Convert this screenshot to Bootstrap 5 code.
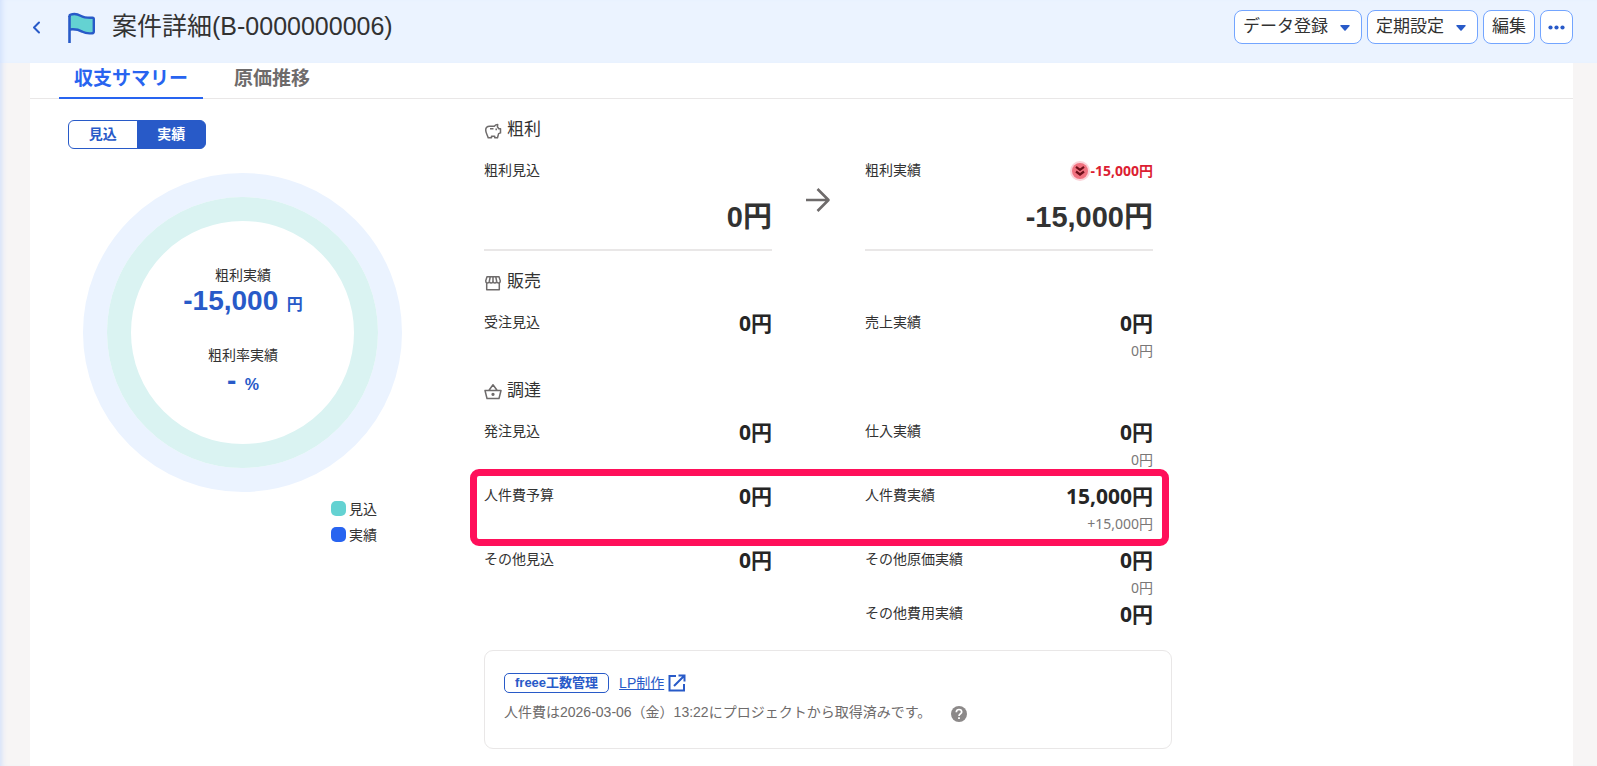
<!DOCTYPE html>
<html lang="ja">
<head>
<meta charset="utf-8">
<meta name="viewport" content="width=device-width, initial-scale=1">
<title>案件詳細(B-0000000006)</title>
<link href="https://cdn.jsdelivr.net/npm/bootstrap@5.3.0/dist/css/bootstrap.min.css" rel="stylesheet">
<style>
  :root {
    --ink: #323232;
    --blue: #285ac8;
    --blue-bright: #2864f0;
    --blue-pale: #ebf3ff;
    --teal: #64d2d2;
    --line: #e9e7e7;
    --gray: #6e6b6b;
  }
  body {
    font-family: "Liberation Sans", "Noto Sans CJK JP", sans-serif;
    font-size: 14px;
    color: var(--ink);
    background: #f7f5f5;
    min-height: 100vh;
    display: flex;
    flex-direction: column;
    box-shadow: inset 6px 0 6px -5px #c9dbfb;
  }
  .topbar { background: var(--blue-pale); height: 63px; padding: 10px 24px 0 30px; box-shadow: inset 6px 0 6px -5px #c9dbfb; }
  .topbar h1 { font-size: 25px; line-height: 32px; font-weight: 400; margin: 0; padding-bottom: 2px; }
  .top-actions { gap: 5px; }
  .back-link { display: flex; width: 12px; color: var(--blue); }
  .flag-icon { margin: 0 15px 0 25px; }
  .btn-top {
    --bs-btn-color: var(--ink);
    --bs-btn-bg: #fff;
    --bs-btn-border-color: #73a5ff;
    --bs-btn-hover-bg: var(--blue-pale);
    --bs-btn-hover-color: var(--ink);
    --bs-btn-hover-border-color: #73a5ff;
    --bs-btn-font-size: 17px;
    --bs-btn-padding-x: 8px;
    --bs-btn-padding-y: 0;
    --bs-btn-border-radius: 8px;
    --bs-btn-line-height: 28px;
    height: 34px;
    white-space: nowrap;
    display: flex;
    align-items: center;
  }
  .btn-top svg { color: var(--blue); margin: 2px 3px 0 12px; }
  .btn-top.more { padding: 0 7px; }
  .btn-top.more svg { margin: 1px 0 0; }

  .panel { background: #fff; margin: 0 24px 0 30px; flex: 1; }
  .tabs { border-bottom: 1px solid var(--line); height: 36px; padding-left: 29px; gap: 16px; }
  .tabs .nav-link {
    font-size: 19px; line-height: 32px; font-weight: 700; color: var(--gray);
    padding: 0 15px; height: 36px; border-bottom: 2px solid transparent; border-radius: 0;
  }
  .tabs .nav-link.active { color: var(--blue-bright); border-color: var(--blue-bright); }

  .chart-col { width: 454px; padding: 21px 0 0 38px; }
  .switch { width: 138px; }
  .switch .btn {
    --bs-btn-color: var(--blue);
    --bs-btn-border-color: var(--blue);
    --bs-btn-active-color: #fff;
    --bs-btn-active-bg: var(--blue);
    --bs-btn-active-border-color: var(--blue);
    --bs-btn-font-size: 14px;
    --bs-btn-font-weight: 700;
    --bs-btn-padding-x: 0;
    --bs-btn-padding-y: 0;
    --bs-btn-line-height: 27px;
    --bs-btn-border-radius: 6px;
  }
  .donut { width: 320px; height: 320px; margin: 24px 0 0 15px; display: grid; }
  .donut > * { grid-area: 1 / 1; }
  .donut-text { text-align: center; padding-top: 92px; line-height: 20px; }
  .rate { margin-top: 24px; }
  .figure-blue { color: var(--blue); font-weight: 700; font-size: 16px; line-height: 32px; }
  .figure-blue strong { font-size: 28px; margin-right: 4px; }
  .legend { width: 317px; padding: 3px 8px 0 0; line-height: 26px; }
  .swatch { width: 15px; height: 15px; border-radius: 5px; margin-right: 3px; margin-bottom: 2px; }
  .bg-plan { background: var(--teal); }
  .bg-actual { background: var(--blue-bright); }

  .summary { width: 688px; padding-top: 19px; }
  .section-head { font-size: 17px; line-height: 24px; font-weight: 400; margin: 0 0 13px; display: flex; align-items: center; }
  .section-head svg { color: var(--gray); margin: 1px 5px 0 0; }
  .pair { display: grid; grid-template-columns: 288px 288px; column-gap: 93px; position: relative; margin-bottom: 10px; }
  .pair.with-arrow { grid-template-columns: 288px 93px 288px; column-gap: 0; margin-bottom: 19px; }
  .pair.last-of-group { margin-bottom: 18px; }
  .pair.tight { margin-bottom: 0; }
  .item-line { display: flex; justify-content: space-between; line-height: 30px; height: 32px; }
  .amount { font: 700 21px/32px "Noto Sans", "Noto Sans CJK JP", sans-serif; color: #252525; }
  .diff { font: 400 14px/24px "Noto Sans", "Noto Sans CJK JP", sans-serif; color: #7a7777; text-align: right; height: 22px; }
  .amount-total { font-size: 29px; font-weight: 700; line-height: 60px; height: 62px; text-align: right; }
  .headline-item { border-bottom: 2px solid var(--line); }
  .loss { font: 700 14px/32px "Noto Sans", "Noto Sans CJK JP", sans-serif; color: #dc1e32; display: flex; align-items: center; }
  .marked::after {
    content: ""; position: absolute; left: -14px; right: 3px; top: -11px; bottom: -12px;
    border: 7px solid #ff0f5a; border-radius: 9px; pointer-events: none;
  }
  .notice { border: 1px solid var(--line); border-radius: 9px; height: 99px; padding: 22px 19px; margin-top: 20px; color: var(--gray); }
  .tag { border: 1px solid var(--blue); border-radius: 5px; color: var(--blue); font-size: 13px; font-weight: 700; line-height: 18px; padding: 0 10px; margin-right: 10px; }
  .notice a { color: var(--blue); line-height: 20px; }
  .notice p { line-height: 22px; margin: 8px 0 0; }
  .help { border: 0; background: none; padding: 0; margin: 4px 0 0 20px; display: flex; }
</style>
</head>
<body>
<header class="topbar d-flex align-items-start justify-content-between">
  <div class="d-flex align-items-center">
    <a class="back-link" href="#" aria-label="戻る">
      <svg width="12" height="16" viewBox="0 0 12 16" fill="none" stroke="currentColor" stroke-width="2" stroke-linecap="round" stroke-linejoin="round"><path d="M9 3.500 4 8.500l5 5"/></svg>
    </a>
    <svg class="flag-icon" width="30" height="34" viewBox="0 0 30 34" aria-hidden="true"><path d="M2.500 7V6q0-1.200 1-1.400C7 3.600 10.500 4 13.500 5.700s7 2.200 12 2Q26.800 7.700 26.800 9v12.500q0 1.600-1.400 1.700c-3.500.4-7.200.1-9.900-1.400s-5.500-3.300-13-2.300" fill="#64d2d2" stroke="#285ac8" stroke-width="2.400" stroke-linejoin="round"/><path d="M2.500 6V33" stroke="#285ac8" stroke-width="2.600"/></svg>
    <h1>案件詳細(B-0000000006)</h1>
  </div>
  <div class="d-flex top-actions">
    <button type="button" class="btn btn-top">データ登録<svg width="10" height="6" viewBox="0 0 10 6" fill="currentColor"><path d="M1 0h8q1 .3.600 1L5.600 5.600q-.6.500-1.200 0L.4 1Q0 .3 1 0z"/></svg></button>
    <button type="button" class="btn btn-top">定期設定<svg width="10" height="6" viewBox="0 0 10 6" fill="currentColor"><path d="M1 0h8q1 .3.600 1L5.600 5.600q-.6.500-1.200 0L.4 1Q0 .3 1 0z"/></svg></button>
    <button type="button" class="btn btn-top">編集</button>
    <button type="button" class="btn btn-top more" aria-label="その他"><svg width="17" height="5" viewBox="0 0 17 5" fill="currentColor"><circle cx="2.500" cy="2.500" r="2.100"/><circle cx="8.500" cy="2.500" r="2.100"/><circle cx="14.500" cy="2.500" r="2.100"/></svg></button>
  </div>
</header>

<main class="panel">
  <nav class="nav tabs flex-nowrap">
    <a class="nav-link active" href="#" aria-current="page">収支サマリー</a>
    <a class="nav-link" href="#">原価推移</a>
  </nav>
  <div class="d-flex">
    <section class="chart-col flex-shrink-0">
      <div class="btn-group switch" role="group" aria-label="表示切替">
        <input type="radio" class="btn-check" name="mode" id="mode-plan" autocomplete="off">
        <label class="btn" for="mode-plan">見込</label>
        <input type="radio" class="btn-check" name="mode" id="mode-actual" autocomplete="off" checked>
        <label class="btn" for="mode-actual">実績</label>
      </div>
      <div class="donut">
        <svg width="320" height="320" viewBox="0 0 320 320" fill="none" stroke-width="24" aria-hidden="true"><circle cx="159.500" cy="159.500" r="147.500" stroke="#ebf3ff"/><circle cx="159.500" cy="159.500" r="123.500" stroke="#daf3f2"/></svg>
        <div class="donut-text">
          <div>粗利実績</div>
          <div class="figure-blue"><strong>-15,000</strong> 円</div>
          <div class="rate">粗利率実績</div>
          <div class="figure-blue"><strong>-</strong> <span>%</span></div>
        </div>
      </div>
      <div class="legend d-flex justify-content-end">
        <div>
          <div class="d-flex align-items-center"><span class="swatch bg-plan"></span>見込</div>
          <div class="d-flex align-items-center"><span class="swatch bg-actual"></span>実績</div>
        </div>
      </div>
    </section>

    <section class="summary flex-shrink-0">
      <h2 class="section-head"><svg width="18" height="18" viewBox="0 0 18 18" fill="none" stroke="currentColor" stroke-width="1.500" stroke-linejoin="round"><path d="M4.200 15.700C3.400 12.800 1.700 11 1.700 8 1.700 5.700 3.500 4.200 5.700 4.200h4.600c.9-1.100 1.900-1.700 3.400-1.700l-.3 2.300 1.400 2h1.700v4.100l-1.900.7-1.100 4.100h-2.800v-1.500H7.500v1.500z"/><path d="M6 6.800h3.500M12.200 6.500v1.700"/></svg>粗利</h2>
      <div class="pair with-arrow">
        <div class="headline-item">
          <div class="item-line"><span>粗利見込</span></div>
          <div class="amount-total">0円</div>
        </div>
        <div class="d-flex justify-content-center pt-3 mt-3">
          <svg width="26" height="26" viewBox="0 0 26 26" fill="none" stroke="#6e6b6b" stroke-width="2.600" aria-hidden="true"><path d="M0 13h23M11.500 2 22.500 13l-11 11" stroke-linejoin="round"/></svg>
        </div>
        <div class="headline-item">
          <div class="item-line"><span>粗利実績</span><span class="loss"><svg width="20" height="20" viewBox="0 0 20 20" fill="none" aria-hidden="true"><circle cx="10" cy="10" r="10" fill="#fbd3d9"/><circle cx="10" cy="10" r="8" fill="#f0717f"/><path d="m6 5.800 4 3 4-3M6 10.500l4 3 4-3" stroke="#6e0f19" stroke-width="2.200"/></svg>-15,000円</span></div>
          <div class="amount-total">-15,000円</div>
        </div>
      </div>

      <h2 class="section-head"><svg width="18" height="18" viewBox="0 0 18 18" fill="none" stroke="currentColor" stroke-width="1.500" stroke-linejoin="round"><path d="M3 2.700h12l1.300 4.200c0 2.400-2.800 2.700-3.600.5-.7 2.200-3.400 2.200-3.700 0-.3 2.200-3 2.200-3.700 0-.8 2.200-3.600 1.900-3.600-.5zM6.200 3l-.9 4.400M9 3v4.400M11.800 3l.9 4.400M2.700 9v6.700h12.600V9"/></svg>販売</h2>
      <div class="pair last-of-group">
        <div class="item-line"><span>受注見込</span><span class="amount">0円</span></div>
        <div><div class="item-line"><span>売上実績</span><span class="amount">0円</span></div><div class="diff">0円</div></div>
      </div>

      <h2 class="section-head"><svg width="18" height="18" viewBox="0 0 18 18" fill="none" stroke="currentColor" stroke-width="1.500" stroke-linejoin="round"><path d="M1 7.500h16l-2 8H3zM5 7.200l4-5.400 4 5.400"/><circle cx="9" cy="11.300" r=".9" fill="currentColor"/></svg>調達</h2>
      <div class="pair">
        <div class="item-line"><span>発注見込</span><span class="amount">0円</span></div>
        <div><div class="item-line"><span>仕入実績</span><span class="amount">0円</span></div><div class="diff">0円</div></div>
      </div>
      <div class="pair marked">
        <div class="item-line"><span>人件費予算</span><span class="amount">0円</span></div>
        <div><div class="item-line"><span>人件費実績</span><span class="amount">15,000円</span></div><div class="diff">+15,000円</div></div>
      </div>
      <div class="pair tight">
        <div class="item-line"><span>その他見込</span><span class="amount">0円</span></div>
        <div>
          <div class="item-line"><span>その他原価実績</span><span class="amount">0円</span></div><div class="diff">0円</div>
          <div class="item-line"><span>その他費用実績</span><span class="amount">0円</span></div>
        </div>
      </div>

      <div class="notice">
        <div class="d-flex align-items-center">
          <span class="tag">freee工数管理</span>
          <a href="#">LP制作</a>
          <svg class="ms-1" width="18" height="18" viewBox="0 0 18 18" fill="none" stroke="#285ac8" stroke-width="2" aria-hidden="true"><path d="M8 2H1.500v14.500H16V10M10.500 1.500H16.500V7.500M16 2 6 12"/></svg>
        </div>
        <div class="d-flex align-items-center">
          <p>人件費は2026-03-06（金）13:22にプロジェクトから取得済みです。</p>
          <button type="button" class="help pt-2" aria-label="ヘルプ"><svg width="16" height="16" viewBox="0 0 16 16" fill="none"><circle cx="8" cy="8" r="8" fill="#8c8989"/><path d="M5.300 6.300C5.300 4.500 6.500 3.500 8 3.500s2.700 1 2.700 2.500C10.700 7.700 8 7.800 8 9.900" stroke="#fff" stroke-width="1.700"/><path d="M7.100 11.200h1.800V13H7.100z" fill="#fff"/></svg></button>
        </div>
      </div>
    </section>
  </div>
</main>
<script src="https://cdn.jsdelivr.net/npm/bootstrap@5.3.0/dist/js/bootstrap.bundle.min.js"></script>
</body>
</html>
